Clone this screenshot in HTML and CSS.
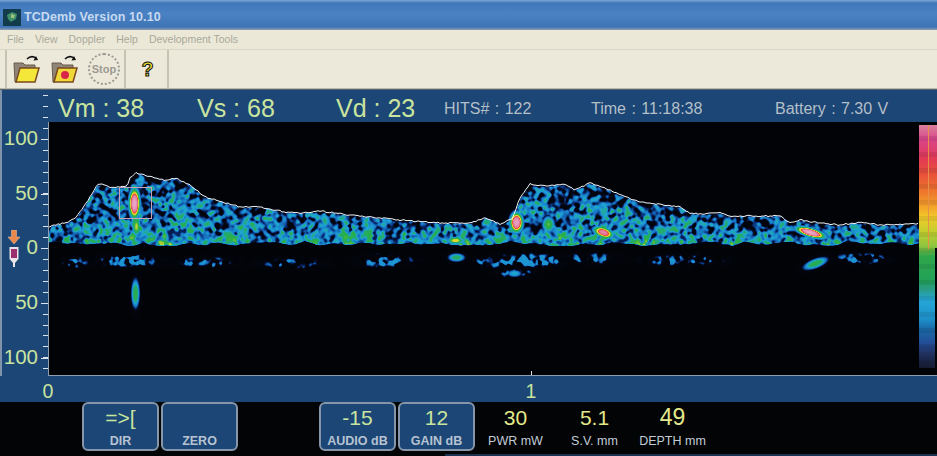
FILE: index.html
```html
<!DOCTYPE html>
<html lang="en">

<head>
  <meta charset="UTF-8" />
  <title>TCDemb Version 10.10</title>
  <link rel="stylesheet" href="styles.css">
</head>

<body>

  <div class="titlebar">
    <svg class="app-icon" width="18" height="17" viewBox="0 0 18 17">
      <rect width="18" height="17" fill="#123c4c" />
      <path d="M4 6 L9 3 L14 5 L13 10 L8 13 L5 10 Z" fill="#3f8f6a" />
      <path d="M8 5 L12 6 L11 9 L8 9 Z" fill="#9ec27a" />
    </svg>
    <span>TCDemb Version 10.10</span>
  </div>

  <ul class="menubar">
    <li>File</li>
    <li>View</li>
    <li>Doppler</li>
    <li>Help</li>
    <li>Development Tools</li>
  </ul>

  <div class="toolbar">
    <div class="tool-group">
      <svg width="30" height="30" viewBox="0 0 30 30">
        <path d="M15 5 C18 2 21 2 24 4" fill="none" stroke="#111" stroke-width="1.5" />
        <path d="M26 6 L21.500 6.500 L24 2 Z" fill="#111" />
        <path d="M2 9 L11 9 L13 11 L23 11 L23 15 L8 15 L5 28 L3 28 Z" fill="#8f8578" stroke="#6b5a4a" />
        <path d="M8 14 L27 14 L23 28 L4 28 Z" fill="#f4e73a" stroke="#7a4a1e" stroke-width="1.500" />
      </svg>
      <svg width="30" height="30" viewBox="0 0 30 30">
        <path d="M15 5 C18 2 21 2 24 4" fill="none" stroke="#111" stroke-width="1.5" />
        <path d="M26 6 L21.500 6.500 L24 2 Z" fill="#111" />
        <path d="M2 9 L11 9 L13 11 L23 11 L23 15 L8 15 L5 28 L3 28 Z" fill="#8f8578" stroke="#6b5a4a" />
        <path d="M8 14 L27 14 L23 28 L4 28 Z" fill="#f0d83a" stroke="#7a4a1e" stroke-width="1.500" />
        <circle cx="15" cy="21" r="4" fill="#d8264a" />
      </svg>
      <div class="stop-btn">Stop</div>
    </div>
    <div class="tool-group help-group">
      <span class="help-btn">?</span>
    </div>
  </div>

  <div class="scope">
    <div class="y-axis">
      <div class="y-labels">
        <span>100</span>
        <span>50</span>
        <span>0</span>
        <span>50</span>
        <span>100</span>
      </div>
      <svg class="probe" width="14" height="38" viewBox="0 0 14 38">
        <path d="M4.500 0 L9.500 0 L9.500 7 L13 7 L7 14 L1 7 L4.500 7 Z" fill="#e8884a" stroke="#f0c8a8" stroke-width="0.500" />
        <path d="M2.500 17 L11.500 17 L11.500 29 L8 33 L8 37 L6 37 L6 33 L2.500 29 Z" fill="#e8e4ea" />
        <rect x="4" y="19" width="6" height="9" fill="#9c2f6e" />
      </svg>
    </div>
    <div class="scope-main">
      <div class="readouts">
        <span class="big w-vm">Vm : 38</span>
        <span class="big w-vs">Vs : 68</span>
        <span class="big w-vd">Vd : 23</span>
        <span class="small w-hits">HITS# : 122</span>
        <span class="small w-time">Time : 11:18:38</span>
        <span class="small">Battery : 7.30 V</span>
      </div>
      <div class="plot-row">
        <canvas id="spectrum" width="871" height="253"></canvas>
        <div class="colorbar"></div>
      </div>
    </div>
  </div>

  <div class="x-axis">
    <span class="x-zero">0</span>
    <span class="x-one">1</span>
  </div>

  <div class="controls">
    <div class="ctl-btn"><b>=&gt;[</b><small>DIR</small></div>
    <div class="ctl-btn"><b></b><small>ZERO</small></div>
    <div class="ctl-btn audio"><b>-15</b><small>AUDIO dB</small></div>
    <div class="ctl-btn"><b>12</b><small>GAIN dB</small></div>
    <div class="ctl-read pwr"><b>30</b><small>PWR mW</small></div>
    <div class="ctl-read sv"><b>5.1</b><small>S.V. mm</small></div>
    <div class="ctl-read depth"><b>49</b><small>DEPTH mm</small></div>
  </div>

  <script src="spectrum.js"></script>

</body>

</html>
```

FILE: styles.css
```css
* {
  margin: 0;
  padding: 0;
  box-sizing: border-box;
}

html, body {
  width: 937px;
  height: 456px;
  overflow: hidden;
  background: #020406;
  font-family: 'Liberation Sans', Arial, sans-serif;
}

.titlebar {
  height: 30px;
  display: flex;
  align-items: center;
  gap: 3px;
  padding: 4px 0 0 3px;
  background: linear-gradient(to bottom, #7ea6d6 0, #3f77ba 3px, #4a82c4 14px, #3d74b6 27px, #8f9fb0 30px);
  color: #c6daf1;
  font-size: 12.500px;
  font-weight: bold;
  letter-spacing: 0.1px;
}

.menubar {
  height: 20px;
  display: flex;
  align-items: center;
  gap: 11px;
  padding: 0 0 2px 7px;
  list-style: none;
  background: #ebe8d8;
  border-bottom: 1px solid #d8d5c4;
  color: #aaa899;
  font-size: 10.500px;
}

.toolbar {
  height: 39px;
  display: flex;
  background: #ece9da;
  border-bottom: 1px solid #b9b7a8;
}

.tool-group {
  width: 121px;
  margin-left: 5px;
  display: flex;
  align-items: center;
  gap: 8px;
  padding-left: 5px;
  border-left: 2px solid #c6c3b2;
  border-right: 2px solid #c6c3b2;
}

.help-group {
  width: 43px;
  margin-left: 0;
  padding-left: 2px;
  justify-content: center;
  border-left: 0;
}

.stop-btn {
  width: 32px;
  height: 32px;
  border: 2px dotted #9b9a92;
  border-radius: 50%;
  display: flex;
  align-items: center;
  justify-content: center;
  color: #9b9a92;
  font-size: 11px;
  font-weight: bold;
}

.help-btn {
  color: #e8d830;
  font-size: 20px;
  font-weight: bold;
  -webkit-text-stroke: 1px #111;
}

.scope {
  height: 287px;
  display: flex;
  background: #1b4675;
  border-top: 1px solid #5a6470;
}

.y-axis {
  position: relative;
  width: 48px;
  flex-shrink: 0;
  border-left: 2px solid #7f93ab;
  background:
    repeating-linear-gradient(to bottom, #dbe4ee 0, #dbe4ee 1px, transparent 1px, transparent 54.650px) 39px 49px / 7px 100% no-repeat,
    repeating-linear-gradient(to bottom, #dbe4ee 0, #dbe4ee 1px, transparent 1px, transparent 10.930px) 41px 5px / 5px 100% no-repeat;
}

.y-labels {
  position: absolute;
  top: 32px;
  left: 0;
  width: 36px;
  display: flex;
  flex-direction: column;
  align-items: flex-end;
  color: #c9e49f;
  font-size: 20.500px;
}

.y-labels span {
  height: 54.700px;
  line-height: 32px;
}

.probe {
  position: absolute;
  left: 5px;
  top: 140px;
}

.scope-main {
  flex: 1;
  display: flex;
  flex-direction: column;
}

.readouts {
  height: 32px;
  display: flex;
  align-items: center;
  padding: 4px 0 0 10px;
  color: #c9e49f;
}

.big {
  font-size: 25px;
}

.small {
  margin-top: 2px;
  color: #b4bfc8;
  font-size: 16px;
  word-spacing: 1px;
}

.w-vm, .w-vs {
  width: 139px;
}

.w-vd {
  width: 108px;
}

.w-hits {
  width: 147px;
}

.w-time {
  width: 184px;
}

.plot-row {
  height: 254px;
  display: flex;
  background: #020307;
  border-bottom: 1px solid #8d9fb2;
}

.plot-row canvas {
  display: block;
  width: 871px;
  height: 253px;
}

.colorbar {
  position: relative;
  width: 18px;
  height: 243px;
  margin-top: 3px;
  background: linear-gradient(to bottom,
    #d9829c 0, #d9458a 6%, #e23a55 14%, #e8503a 20%, #ee7a2c 28%, #f3a62a 34%,
    #f2c92a 38%, #c2cf2e 44%, #8cc440 50%, #2fa64a 54%, #22a158 64%, #2a9c8c 68%,
    #25a8d8 72%, #1d8fc8 80%, #1a6aa8 84%, #234c96 90%, #20305f 94%, #141a30 100%);
}

.colorbar::before {
  content: "";
  position: absolute;
  inset: 0;
  background:
    linear-gradient(#020307, #020307) 16px 123px / 2px 120px no-repeat,
    repeating-linear-gradient(to bottom, transparent 0, transparent 11px, rgba(0, 0, 0, 0.08) 11px, rgba(0, 0, 0, 0.08) 16px);
}

.colorbar::after {
  content: "";
  position: absolute;
  left: 9px;
  top: 0;
  width: 1px;
  height: 124px;
  background: #e89048;
}

.x-axis {
  height: 26px;
  display: flex;
  align-items: center;
  padding-top: 4px;
  background: #1b4675;
  color: #c9e49f;
  font-size: 19.500px;
}

.x-zero {
  width: 20px;
  margin-left: 38px;
  text-align: center;
}

.x-one {
  width: 20px;
  margin-left: 463px;
  text-align: center;
}

.controls {
  height: 54px;
  display: flex;
  gap: 2px;
  padding-left: 82px;
  background: linear-gradient(#1b3350, #1b3350) 445px 100% / 492px 2px no-repeat, #020406;
}

.ctl-btn, .ctl-read {
  height: 49px;
  width: 77px;
  display: flex;
  flex-direction: column;
  align-items: center;
  text-align: center;
}

.ctl-btn {
  background: #1b4675;
  border: 2px solid #8696aa;
  border-radius: 6px;
  padding-top: 1px;
}

.audio {
  margin-left: 79px;
}

.ctl-read {
  padding-top: 3px;
}

.depth {
  margin-left: -1px;
}

.controls b {
  height: 25px;
  font-weight: normal;
  font-size: 21px;
  line-height: 25px;
  color: #c9e49f;
}

.ctl-read b {
  color: #e3e98a;
}

.depth b {
  font-size: 23px;
}

.controls small {
  margin-top: 3px;
  font-size: 12.500px;
  line-height: 16px;
  white-space: nowrap;
  color: #c3ccd6;
}

.ctl-btn small {
  font-weight: bold;
  color: #b7c3d2;
}
```

FILE: spectrum.js
```js
// draws the doppler spectrum onto the canvas, coordinates below are page pixels
const X0 = 48, Y0 = 122;
const canvas = document.getElementById('spectrum');
const ctx = canvas.getContext('2d');
const W = canvas.width, H = canvas.height;

const envelope = [
  [48, 227], [68, 222], [75, 218], [85, 205], [97, 185], [103, 184], [110, 188], [120, 187],
  [127, 186], [130, 178], [136, 173], [147, 176], [165, 180], [175, 178], [190, 185], [205, 197],
  [220, 201], [240, 207], [260, 207], [285, 212], [300, 213], [320, 211], [350, 215], [400, 220],
  [440, 223], [470, 223], [485, 218], [500, 224], [512, 219], [520, 198], [530, 184], [545, 186],
  [565, 184], [575, 190], [590, 183], [605, 188], [620, 195], [640, 202], [665, 205], [680, 207],
  [690, 213], [700, 214], [720, 213], [730, 216], [760, 216], [780, 216], [790, 223], [800, 220],
  [820, 223], [840, 225], [860, 222], [880, 225], [919, 224]
];

// x, y, radius x, radius y, peak on the colour scale, lean of the streak
const hot = [
  [134, 203, 5.5, 15, 1.09, 0], [136, 226, 4, 10, 0.8, 0], [516, 222, 6.5, 10, 1.07, 0], [603, 232, 9, 6, 1.0, 0.7],
  [810, 232, 11, 6, 1.09, 1.6], [455, 240, 8, 3.5, 0.84, 0], [548, 224, 6, 8, 0.76, 0],
  [135, 293, 4, 14, 0.72, 0], [456, 257, 8, 4, 0.68, 0], [815, 263, 9, 6, 0.72, -1.2], [514, 273, 7, 3.5, 0.58, 0]
];

// speckled patches below the zero line
const lower = [
  [130, 260, 26, 6, 0.62], [75, 262, 12, 5, 0.42], [205, 262, 30, 5, 0.46], [290, 263, 30, 5, 0.42],
  [385, 260, 24, 6, 0.54], [525, 260, 36, 6, 0.6], [590, 258, 24, 5, 0.46], [680, 260, 40, 5, 0.42],
  [860, 258, 24, 5, 0.46], [515, 272, 16, 5, 0.46], [490, 262, 16, 5, 0.46]
];

// small seeded generator so every render is the same
let seed = 1234567;
function rnd() {
  seed = (seed * 1664525 + 1013904223) >>> 0;
  return seed / 4294967296;
}

// value noise on a rotated lattice, so the blobs don't line up with the pixels
function makeLayer(cell, angle) {
  const size = 256;
  const grid = [];
  for (let i = 0; i < size * size; i++) grid.push(rnd());
  const cos = Math.cos(angle), sin = Math.sin(angle);
  const at = function (ix, iy) {
    return grid[(((iy % size) + size) % size) * size + ((ix % size) + size) % size];
  };
  return function (x, y) {
    const gx = (x * cos - y * sin) / cell, gy = (x * sin + y * cos) / cell;
    const ix = Math.floor(gx), iy = Math.floor(gy);
    let fx = gx - ix, fy = gy - iy;
    fx = fx * fx * (3 - 2 * fx);
    fy = fy * fy * (3 - 2 * fy);
    const a = at(ix, iy), b = at(ix + 1, iy), c = at(ix, iy + 1), d = at(ix + 1, iy + 1);
    return (a + (b - a) * fx) * (1 - fy) + (c + (d - c) * fx) * fy;
  };
}

const fineA = makeLayer(3.8, 0.52);
const fineB = makeLayer(3.4, -0.61);
const coarse = makeLayer(14, 0.3);

function speckle(x, y) {
  const n = (fineA(x, y) + fineB(x, y)) / 2;
  return Math.min(1, Math.max(0, (n - 0.5) * 2 + 0.5));
}

function envAt(x) {
  for (let i = 1; i < envelope.length; i++) {
    if (x <= envelope[i][0]) {
      const p = envelope[i - 1], q = envelope[i];
      return p[1] + (q[1] - p[1]) * (x - p[0]) / (q[0] - p[0]);
    }
  }
  return envelope[envelope.length - 1][1];
}

function peak(list, x, y) {
  let out = 0;
  list.forEach(function (h) {
    const dy = (y - h[1]) / h[3];
    const dx = (x - h[0] - (y - h[1]) * (h[5] || 0)) / h[2];
    const d = (dx * dx + dy * dy) * 0.7;
    out = Math.max(out, h[4] * Math.exp(-Math.pow(d, 1.3)));
  });
  return out;
}

const stops = [
  [0.00, 2, 3, 7], [0.26, 3, 6, 16], [0.34, 8, 40, 110], [0.42, 22, 110, 190], [0.56, 30, 165, 215],
  [0.63, 34, 170, 120], [0.74, 40, 175, 70], [0.80, 190, 210, 50], [0.85, 245, 215, 40],
  [0.90, 235, 70, 50], [0.97, 225, 120, 160], [1.10, 235, 170, 200]
];

function colorAt(v) {
  for (let i = 1; i < stops.length; i++) {
    if (v <= stops[i][0]) {
      const p = stops[i - 1], q = stops[i];
      const t = (v - p[0]) / (q[0] - p[0]);
      return [p[1] + (q[1] - p[1]) * t, p[2] + (q[2] - p[2]) * t, p[3] + (q[3] - p[3]) * t];
    }
  }
  return stops[stops.length - 1].slice(1);
}

const img = ctx.createImageData(W, H);
for (let py = 0; py < H; py++) {
  for (let px = 0; px < W; px++) {
    const x = px + X0, y = py + Y0;
    const n = speckle(px, py), m = coarse(px, py);
    const top = envAt(x);
    const bottom = 242 + m * 5;
    let v = 0;
    if (y >= top - 2 && y < bottom) {
      const depth = (y - top) / Math.max(bottom - top, 1);
      const edge = Math.min(1, (y - top + 3) / 4) * Math.min(1, (bottom - y) / 2);
      v = (0.15 + n * 0.42 + (m - 0.5) * 0.14 + depth * 0.18) * edge;
    } else if (y >= 250) {
      const patch = peak(lower, x, y);
      if (patch > 0.02) v = Math.min(0.52, patch * (n * 1.45));
    }
    v = Math.max(v, peak(hot, x, y));
    const c = colorAt(Math.min(Math.max(v, 0), 1.09));
    const k = (py * W + px) * 4;
    img.data[k] = c[0];
    img.data[k + 1] = c[1];
    img.data[k + 2] = c[2];
    img.data[k + 3] = 255;
  }
}
ctx.putImageData(img, 0, 0);

// envelope line, a little jagged
ctx.strokeStyle = '#eef4f4';
ctx.lineWidth = 1;
ctx.beginPath();
ctx.moveTo(0, envAt(X0) - Y0);
for (let x = X0 + 2; x < X0 + W; x += 2) {
  ctx.lineTo(x - X0, envAt(x) - Y0 + (rnd() - 0.5) * 1.4);
}
ctx.stroke();

// selection box on the hit
ctx.strokeStyle = '#c9a3b4';
ctx.strokeRect(119.5 - X0, 187.5 - Y0, 32, 31);

// left edge and time ticks
ctx.fillStyle = '#8d9fb2';
ctx.fillRect(0, 0, 1, H);
ctx.fillStyle = '#dfe8f0';
ctx.fillRect(531 - X0, H - 4, 1, 4);
```
